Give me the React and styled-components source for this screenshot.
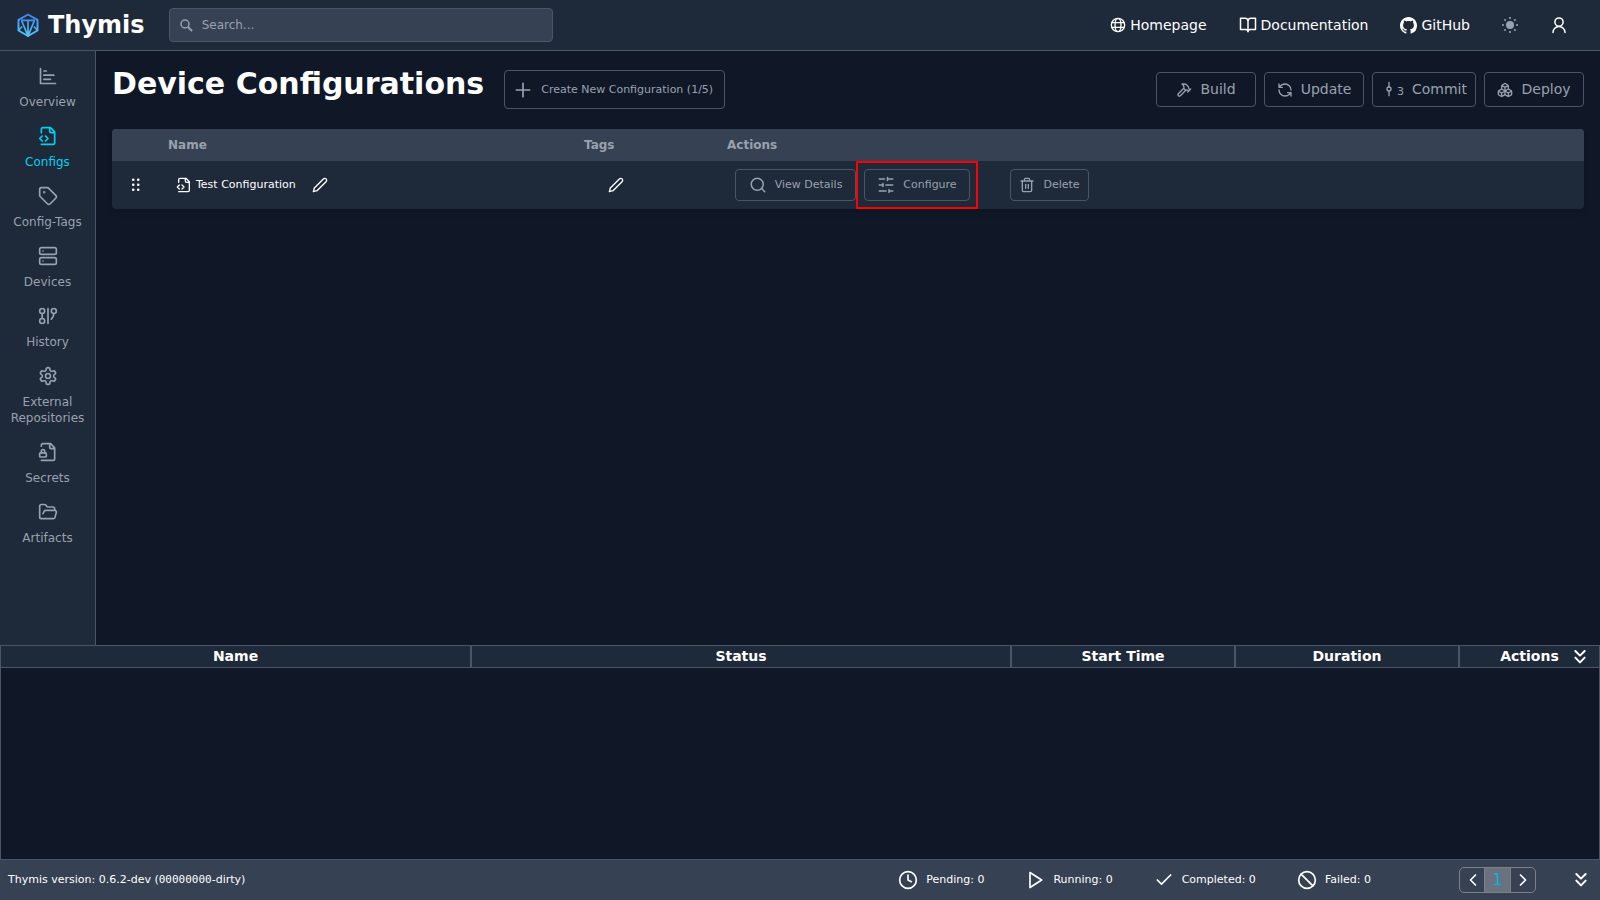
import React from "react";
import styled, { createGlobalStyle, css } from "styled-components";

const c = {
  bg: "#101828",
  panel: "#1e2939",
  raised: "#364153",
  line: "#4a5565",
  muted: "#99a1af",
  active: "#00d3f2",
  page: "#00b8db",
};

const GlobalStyle = createGlobalStyle`
  *, *::before, *::after { box-sizing: border-box; }
  body {
    margin: 0;
    background: ${c.bg};
    color: #fff;
    font-family: "DejaVu Sans", sans-serif;
    font-size: 14px;
    line-height: 21px;
  }
  button, input { font: inherit; color: inherit; }
  a { color: inherit; text-decoration: none; }
  h1 { margin: 0; }
`;

/* ---------- icons ---------- */

const Svg = styled.svg`
  display: block;
  flex: none;
  width: ${(p) => p.$size}px;
  height: ${(p) => p.$size}px;
  fill: none;
  stroke: currentColor;
  stroke-width: ${(p) => p.$stroke};
  stroke-linecap: round;
  stroke-linejoin: round;
`;

const shapes = {
  chart: <path d="M3 3v18h18M7 16h8M7 11h12M7 6h3" />,
  fileCode: (
    <path d="M4 22h14a2 2 0 0 0 2-2V7l-5-5H6a2 2 0 0 0-2 2v4M14 2v4a2 2 0 0 0 2 2h4M5 12l-3 3 3 3M9 18l3-3-3-3" />
  ),
  tag: (
    <>
      <path d="M12.586 2.586A2 2 0 0 0 11.172 2H4a2 2 0 0 0-2 2v7.172a2 2 0 0 0 .586 1.414l8.704 8.704a2.426 2.426 0 0 0 3.42 0l6.58-6.58a2.426 2.426 0 0 0 0-3.42z" />
      <circle cx="7.5" cy="7.5" r=".5" fill="currentColor" />
    </>
  ),
  server: (
    <>
      <rect width="20" height="8" x="2" y="2" rx="2" />
      <rect width="20" height="8" x="2" y="14" rx="2" />
      <path d="M6 6h.01M6 18h.01" />
    </>
  ),
  graph: (
    <>
      <circle cx="5" cy="6" r="3" />
      <circle cx="5" cy="18" r="3" />
      <circle cx="19" cy="6" r="3" />
      <path d="M5 9v6M12 3v18M16 15.7A9 9 0 0 0 19 9" />
    </>
  ),
  settings: (
    <>
      <path d="M12.22 2h-.44a2 2 0 0 0-2 2v.18a2 2 0 0 1-1 1.73l-.43.25a2 2 0 0 1-2 0l-.15-.08a2 2 0 0 0-2.73.73l-.22.38a2 2 0 0 0 .73 2.73l.15.1a2 2 0 0 1 1 1.72v.51a2 2 0 0 1-1 1.74l-.15.09a2 2 0 0 0-.73 2.73l.22.38a2 2 0 0 0 2.73.73l.15-.08a2 2 0 0 1 2 0l.43.25a2 2 0 0 1 1 1.73V20a2 2 0 0 0 2 2h.44a2 2 0 0 0 2-2v-.18a2 2 0 0 1 1-1.73l.43-.25a2 2 0 0 1 2 0l.15.08a2 2 0 0 0 2.73-.73l.22-.39a2 2 0 0 0-.73-2.73l-.15-.08a2 2 0 0 1-1-1.74v-.5a2 2 0 0 1 1-1.74l.15-.09a2 2 0 0 0 .73-2.73l-.22-.38a2 2 0 0 0-2.73-.73l-.15.08a2 2 0 0 1-2 0l-.43-.25a2 2 0 0 1-1-1.73V4a2 2 0 0 0-2-2z" />
      <circle cx="12" cy="12" r="3" />
    </>
  ),
  fileLock: (
    <>
      <path d="M4 5V4a2 2 0 0 1 2-2h9l5 5v13a2 2 0 0 1-2 2H4M14 2v4a2 2 0 0 0 2 2h4" />
      <rect width="8" height="5" x="2" y="13" rx="1" />
      <path d="M8 13v-2a2 2 0 1 0-4 0v2" />
    </>
  ),
  folder: (
    <path d="m6 14 1.5-2.9A2 2 0 0 1 9.24 10H20a2 2 0 0 1 1.94 2.5l-1.54 6a2 2 0 0 1-1.95 1.5H4a2 2 0 0 1-2-2V5a2 2 0 0 1 2-2h3.9a2 2 0 0 1 1.69.9l.81 1.2a2 2 0 0 0 1.67.9H18a2 2 0 0 1 2 2v2" />
  ),
  globe: (
    <>
      <circle cx="12" cy="12" r="10" />
      <ellipse cx="12" cy="12" rx="4.5" ry="10" />
      <path d="M3 8.5h18M3 15.5h18" />
    </>
  ),
  book: (
    <path d="M2 3h6a4 4 0 0 1 4 4v14a3 3 0 0 0-3-3H2zM22 3h-6a4 4 0 0 0-4 4v14a3 3 0 0 1 3-3h7z" />
  ),
  user: (
    <>
      <circle cx="12" cy="8" r="5.5" />
      <path d="M20 22a8 8 0 0 0-16 0" />
    </>
  ),
  plus: <path d="M4 12h16M12 4v16" />,
  hammer: (
    <path d="m15 12-8.5 8.5c-.83.83-2.17.83-3 0a2.12 2.12 0 0 1 0-3L12 9M17.64 15 22 10.64M20.91 11.7l-1.25-1.25c-.6-.6-.93-1.4-.93-2.25v-.86L16.01 4.6a5.56 5.56 0 0 0-3.94-1.64H9l.92.82A6.18 6.18 0 0 1 12 8.4v1.56l2 2h2.47l2.26 1.91" />
  ),
  refresh: (
    <path d="M21 12a9 9 0 0 0-9-9 9.75 9.75 0 0 0-6.74 2.74L3 8M3 3v5h5M3 12a9 9 0 0 0 9 9 9.75 9.75 0 0 0 6.74-2.74L21 16M16 16h5v5" />
  ),
  commit: (
    <>
      <path d="M12 2v7M12 15v7" />
      <circle cx="12" cy="12" r="3" />
    </>
  ),
  boxes: (
    <path d="M2.97 12.92A2 2 0 0 0 2 14.63v3.24a2 2 0 0 0 .97 1.71l3 1.8a2 2 0 0 0 2.06 0L12 19v-5.5l-5-3-4.03 2.42ZM7 16.5l-4.74-2.85M7 16.5l5-3M7 16.5v5.17M12 13.5V19l3.97 2.38a2 2 0 0 0 2.06 0l3-1.8a2 2 0 0 0 .97-1.71v-3.24a2 2 0 0 0-.97-1.71L17 10.5l-5 3ZM17 16.5l-5-3M17 16.5l4.74-2.85M17 16.5v5.17M7.97 4.42A2 2 0 0 0 7 6.13v4.37l5 3 5-3V6.13a2 2 0 0 0-.97-1.71l-3-1.8a2 2 0 0 0-2.06 0l-3 1.8ZM12 8 7.26 5.15M12 8l4.74-2.85M12 13.5V8" />
  ),
  search: (
    <>
      <circle cx="11" cy="11" r="8" />
      <path d="m21 21-4.3-4.3" />
    </>
  ),
  sliders: <path d="M21 4h-7M10 4H3M21 12h-9M8 12H3M21 20h-5M12 20H3M14 2v4M8 10v4M16 18v4" />,
  trash: (
    <path d="M3 6h18M19 6v14a2 2 0 0 1-2 2H7a2 2 0 0 1-2-2V6M8 6V4a2 2 0 0 1 2-2h4a2 2 0 0 1 2 2v2M10 11v6M14 11v6" />
  ),
  pen: <path d="M17 3a2.85 2.83 0 1 1 4 4L7.5 20.5 2 22l1.5-5.5Z" />,
  clock: (
    <>
      <circle cx="12" cy="12" r="10" />
      <path d="M12 6v6l4 2" />
    </>
  ),
  play: <path d="M6 3l14 9-14 9z" />,
  check: <path d="M20 6 9 17l-5-5" />,
  ban: (
    <>
      <circle cx="12" cy="12" r="10" />
      <path d="m4.9 4.9 14.2 14.2" />
    </>
  ),
  left: <path d="m15 18-6-6 6-6" />,
  right: <path d="m9 18 6-6-6-6" />,
  down: <path d="m5 3 7 7 7-7M5 13l7 7 7-7" />,
};

const Icon = ({ name, size = 20, stroke = 2 }) => (
  <Svg viewBox="0 0 24 24" $size={size} $stroke={stroke} aria-hidden="true">
    {shapes[name]}
  </Svg>
);

const Logo = () => (
  <svg width="24" height="26" viewBox="0 0 24 26" fill="none" aria-hidden="true">
    <defs>
      <linearGradient id="brand" x1="0" y1="0" x2="0" y2="26" gradientUnits="userSpaceOnUse">
        <stop offset="0" stopColor="#3b7df0" />
        <stop offset="1" stopColor="#56cdf8" />
      </linearGradient>
    </defs>
    <g stroke="url(#brand)" strokeLinejoin="round">
      <path strokeWidth="2" d="M12 2.500 21.500 7.800v10.700L12 24 2.500 18.500V7.800z" />
      <path strokeWidth="1.700" d="M5 8.300h14M12 8.300V24M5.500 8.300 12 24l6.500-15.700M2.500 18.500l3.500-4M21.500 18.500l-3.500-4" />
    </g>
  </svg>
);

const GithubMark = () => (
  <svg width="17" height="17" viewBox="0 0 16 16" fill="currentColor" aria-hidden="true">
    <path d="M8 0C3.58 0 0 3.58 0 8c0 3.540 2.290 6.530 5.470 7.590.4.070.550-.170.550-.380 0-.190-.010-.820-.010-1.490-2.010.370-2.530-.490-2.690-.940-.090-.230-.480-.940-.820-1.130-.280-.150-.680-.520-.010-.530.630-.010 1.080.580 1.230.820.720 1.210 1.870.870 2.330.660.070-.520.280-.870.510-1.070-1.780-.2-3.640-.890-3.640-3.950 0-.870.310-1.590.820-2.150-.080-.2-.360-1.020.080-2.120 0 0 .670-.210 2.200.820.640-.180 1.320-.270 2-.270s1.360.090 2 .270c1.530-1.040 2.200-.820 2.200-.820.440 1.100.160 1.920.080 2.120.510.560.820 1.270.820 2.150 0 3.070-1.870 3.750-3.650 3.950.290.250.540.730.540 1.480 0 1.070-.010 1.930-.010 2.200 0 .210.150.460.550.380A8.010 8.010 0 0 0 16 8c0-4.420-3.580-8-8-8" />
  </svg>
);

const Sun = () => (
  <svg width="16" height="16" viewBox="0 0 20 20" aria-hidden="true">
    <circle cx="10" cy="10" r="5" fill="currentColor" />
    <path
      d="M10 0v2.500M10 17.500V20M0 10h2.500M17.500 10H20M3 3l1.600 1.600M15.400 15.400 17 17M3 17l1.600-1.600M15.400 4.600 17 3"
      stroke="currentColor"
      strokeWidth="2"
    />
  </svg>
);

const Grip = () => (
  <svg width="8" height="14" viewBox="0 0 8 14" fill="currentColor" aria-hidden="true">
    {[0, 5, 10].map((y) => (
      <React.Fragment key={y}>
        <rect x="0" y={y + 0.5} width="2.500" height="2.500" rx="1" />
        <rect x="5" y={y + 0.5} width="2.500" height="2.500" rx="1" />
      </React.Fragment>
    ))}
  </svg>
);

/* ---------- layout ---------- */

const Page = styled.div`
  display: flex;
  flex-direction: column;
  min-height: 100vh;
`;

const TopBar = styled.header`
  display: flex;
  align-items: center;
  height: 51px;
  padding: 0 32px 0 16px;
  background: ${c.panel};
  border-bottom: 1px solid ${c.line};
`;

const Brand = styled.a`
  display: flex;
  align-items: center;
  gap: 8px;
  margin-right: 24px;
  font-size: 24px;
  line-height: 32px;
  font-weight: 700;
`;

const SearchBox = styled.label`
  display: flex;
  align-items: center;
  gap: 9px;
  width: 384px;
  height: 34px;
  padding: 0 10px;
  background: ${c.raised};
  border: 1px solid ${c.line};
  border-radius: 4px;
  color: ${c.muted};
`;

const SearchInput = styled.input`
  flex: 1;
  min-width: 0;
  padding: 0;
  border: 0;
  outline: 0;
  background: none;
  font-size: 12px;
  line-height: 16px;
  &::placeholder { color: ${c.muted}; opacity: 1; }
`;

const TopNav = styled.nav`
  display: flex;
  align-items: center;
  gap: 32px;
  margin-left: auto;
`;

const NavLink = styled.a`
  display: flex;
  align-items: center;
  gap: 4px;
`;

const IconButton = styled.button`
  display: flex;
  align-items: center;
  justify-content: center;
  padding: 0;
  border: 0;
  background: none;
  color: ${(p) => (p.$muted ? c.muted : "#fff")};
  cursor: pointer;
`;

const Middle = styled.div`
  display: flex;
  flex: 1;
`;

const Sidebar = styled.nav`
  flex: none;
  width: 96px;
  padding-top: 7px;
  background: ${c.panel};
  border-right: 1px solid ${c.line};
`;

const SideLink = styled.a`
  display: flex;
  flex-direction: column;
  align-items: center;
  gap: 8px;
  padding: 8px 0;
  color: ${(p) => (p.$active ? c.active : c.muted)};
  font-size: 12px;
  line-height: 16px;
  text-align: center;
`;

const Main = styled.main`
  flex: 1;
  min-width: 0;
  padding: 16px;
`;

const TitleRow = styled.div`
  display: flex;
  align-items: flex-start;
  margin-bottom: 20px;
`;

const Title = styled.h1`
  font-size: 30px;
  line-height: 34px;
  font-weight: 700;
  margin-right: 20px;
`;

const outlined = css`
  display: flex;
  align-items: center;
  justify-content: center;
  background: none;
  border: 1px solid ${c.line};
  border-radius: 4px;
  color: ${c.muted};
  white-space: nowrap;
  cursor: pointer;
`;

const CreateButton = styled.button`
  ${outlined}
  justify-content: flex-start;
  gap: 8px;
  min-width: 221px;
  height: 39px;
  margin-top: 3px;
  padding: 0 8px;
  font-size: 11px;
  line-height: 16px;
`;

const Toolbar = styled.div`
  display: flex;
  gap: 8px;
  margin: 5px 0 0 auto;
`;

const ToolButton = styled.button`
  ${outlined}
  gap: 8px;
  min-width: 100px;
  height: 35px;
  padding: 0 8px;
`;

const CommitMark = styled.span`
  display: flex;
  align-items: flex-start;
`;

const CommitCount = styled.span`
  padding-top: 4px;
  font-size: 11px;
  line-height: 14px;
`;

const ConfigTable = styled.table`
  width: 100%;
  border-collapse: collapse;
  table-layout: fixed;
  border-radius: 4px;
  overflow: hidden;
  background: ${c.panel};
  box-shadow: 0 4px 6px -1px rgb(0 0 0 / 0.1), 0 2px 4px -2px rgb(0 0 0 / 0.1);
`;

const Col = styled.col`
  width: ${(p) => p.$w};
`;

const HeadCell = styled.th`
  height: 32px;
  padding: 0 8px;
  background: ${c.raised};
  color: ${c.muted};
  font-size: 12px;
  line-height: 16px;
  font-weight: 700;
  text-align: left;
`;

const Cell = styled.td`
  height: 48px;
  padding: 0 16px;
  font-size: 11px;
  line-height: 16px;
`;

const CellRow = styled.div`
  display: flex;
  align-items: center;
  justify-content: ${(p) => (p.$center ? "center" : "flex-start")};
  gap: ${(p) => p.$gap || 0}px;
`;

const ConfigName = styled.a`
  display: flex;
  align-items: center;
  gap: 4px;
`;

const RowButton = styled.button`
  ${outlined}
  gap: 8px;
  min-width: ${(p) => p.$min}px;
  height: 32px;
  padding: 0 8px;
`;

const Marked = styled.div`
  position: relative;
  margin-right: 32px;
  &::after {
    content: "";
    position: absolute;
    inset: -8px;
    border: 2px solid #f00;
    pointer-events: none;
  }
`;

const TaskPanel = styled.section`
  position: relative;
  min-height: 214px;
  border: 1px solid ${c.line};
  border-width: 0 1px;
`;

const TaskTable = styled.table`
  width: 100%;
  border-collapse: collapse;
  table-layout: fixed;
`;

const TaskHead = styled.th`
  height: 22px;
  padding: 0 0 2px;
  background: ${c.panel};
  border: solid ${c.line};
  border-width: 1px 2px;
  font-size: 14px;
  line-height: 18px;
  &:first-child { border-left: 0; }
  &:last-child { border-right: 0; }
`;

const PanelToggle = styled(IconButton)`
  position: absolute;
  top: 4px;
  right: 11px;
`;

const Footer = styled.footer`
  display: flex;
  align-items: center;
  height: 41px;
  padding: 0 11px 0 8px;
  background: ${c.raised};
  border-top: 1px solid ${c.line};
  font-size: 11px;
  line-height: 16px;
`;

const Hash = styled.span`
  font-family: "DejaVu Sans Mono", monospace;
`;

const Stats = styled.div`
  display: flex;
  gap: 41px;
  margin: 0 88px 0 auto;
`;

const Stat = styled.div`
  display: flex;
  align-items: center;
  gap: 8px;
`;

const Pager = styled.nav`
  display: flex;
  margin-right: 37px;
  border: 1px solid #808080;
  border-radius: 5px;
  overflow: hidden;
`;

const PageButton = styled.button`
  display: flex;
  align-items: center;
  justify-content: center;
  width: 25px;
  height: 24px;
  padding: 0;
  border: 0;
  background: ${(p) => (p.$current ? "#6a7282" : "none")};
  box-shadow: ${(p) => (p.$current ? "0 0 0 1px #808080" : "none")};
  color: ${(p) => (p.$current ? c.page : "#fff")};
  font-size: 16px;
  line-height: 24px;
  cursor: pointer;
`;

const sideItems = [
  ["Overview", "chart"],
  ["Configs", "fileCode"],
  ["Config-Tags", "tag"],
  ["Devices", "server"],
  ["History", "graph"],
  ["External Repositories", "settings"],
  ["Secrets", "fileLock"],
  ["Artifacts", "folder"],
];

const stats = [
  ["Pending: 0", "clock"],
  ["Running: 0", "play"],
  ["Completed: 0", "check"],
  ["Failed: 0", "ban"],
];

export default function App() {
  return (
    <Page>
      <GlobalStyle />
      <TopBar>
        <Brand href="#">
          <Logo />
          Thymis
        </Brand>
        <SearchBox>
          <svg width="13" height="13" viewBox="0 0 13 13" fill="none" stroke="currentColor" strokeWidth="1.500" aria-hidden="true">
            <circle cx="5" cy="5" r="4" />
            <path d="m8 8 4 4" strokeWidth="2" />
          </svg>
          <SearchInput type="text" placeholder="Search..." aria-label="Search" />
        </SearchBox>
        <TopNav>
          <NavLink href="#"><Icon name="globe" size={16} />Homepage</NavLink>
          <NavLink href="#"><Icon name="book" size={18} />Documentation</NavLink>
          <NavLink href="#"><GithubMark />GitHub</NavLink>
          <IconButton $muted aria-label="Toggle theme"><Sun /></IconButton>
          <IconButton aria-label="Account"><Icon name="user" size={18} /></IconButton>
        </TopNav>
      </TopBar>

      <Middle>
        <Sidebar>
          {sideItems.map(([label, icon]) => (
            <SideLink key={label} href="#" $active={label === "Configs"}>
              <Icon name={icon} />
              {label}
            </SideLink>
          ))}
        </Sidebar>
        <Main>
          <TitleRow>
            <Title>Device Configurations</Title>
            <CreateButton>
              <Icon name="plus" size={20} />
              Create New Configuration (1/5)
            </CreateButton>
            <Toolbar>
              <ToolButton><Icon name="hammer" size={16} />Build</ToolButton>
              <ToolButton><Icon name="refresh" size={16} />Update</ToolButton>
              <ToolButton>
                <CommitMark><Icon name="commit" size={16} /><CommitCount>3</CommitCount></CommitMark>
                Commit
              </ToolButton>
              <ToolButton><Icon name="boxes" size={16} />Deploy</ToolButton>
            </Toolbar>
          </TitleRow>
          <ConfigTable>
            <colgroup>
              <Col $w="48px" />
              <Col $w="416px" />
              <Col $w="143px" />
              <Col $w="auto" />
            </colgroup>
            <thead>
              <tr>
                <HeadCell aria-label="Order" />
                <HeadCell>Name</HeadCell>
                <HeadCell>Tags</HeadCell>
                <HeadCell>Actions</HeadCell>
              </tr>
            </thead>
            <tbody>
              <tr>
                <Cell><CellRow $center><Grip /></CellRow></Cell>
                <Cell>
                  <CellRow $gap={16}>
                    <ConfigName href="#"><Icon name="fileCode" size={16} />Test Configuration</ConfigName>
                    <IconButton aria-label="Rename"><Icon name="pen" size={16} /></IconButton>
                  </CellRow>
                </Cell>
                <Cell>
                  <CellRow $gap={16}>
                    <span />
                    <IconButton aria-label="Edit tags"><Icon name="pen" size={16} /></IconButton>
                  </CellRow>
                </Cell>
                <Cell>
                  <CellRow $gap={8}>
                    <RowButton $min={121}><Icon name="search" size={18} />View Details</RowButton>
                    <Marked>
                      <RowButton $min={106}><Icon name="sliders" size={18} />Configure</RowButton>
                    </Marked>
                    <RowButton $min={79}><Icon name="trash" size={16} />Delete</RowButton>
                  </CellRow>
                </Cell>
              </tr>
            </tbody>
          </ConfigTable>
        </Main>
      </Middle>

      <TaskPanel>
        <TaskTable>
          <colgroup>
            <Col $w="auto" />
            <Col $w="540px" />
            <Col $w="224px" />
            <Col $w="224px" />
            <Col $w="140px" />
          </colgroup>
          <thead>
            <tr>
              {["Name", "Status", "Start Time", "Duration", "Actions"].map((h) => (
                <TaskHead key={h}>{h}</TaskHead>
              ))}
            </tr>
          </thead>
        </TaskTable>
        <PanelToggle aria-label="Collapse tasks"><Icon name="down" size={16} stroke={3} /></PanelToggle>
      </TaskPanel>

      <Footer>
        <span>Thymis version: 0.6.2-dev (<Hash>00000000</Hash>-dirty)</span>
        <Stats>
          {stats.map(([label, icon]) => (
            <Stat key={label}><Icon name={icon} />{label}</Stat>
          ))}
        </Stats>
        <Pager aria-label="Pages">
          <PageButton aria-label="Previous"><Icon name="left" size={20} /></PageButton>
          <PageButton $current>1</PageButton>
          <PageButton aria-label="Next"><Icon name="right" size={20} /></PageButton>
        </Pager>
        <IconButton aria-label="Collapse panel"><Icon name="down" size={16} stroke={3} /></IconButton>
      </Footer>
    </Page>
  );
}
